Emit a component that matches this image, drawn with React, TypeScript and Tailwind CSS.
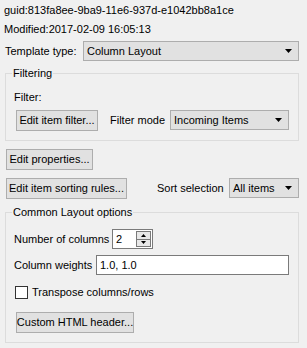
import type { ReactNode } from 'react';

// ─── bits ─────────────────────────────────────────────────────────────────────

function Arrow() {
    return (
        <svg width="7" height="4" viewBox="0 0 7 4" className="shrink-0">
            <path d="M0 0h7L3.5 4z" fill="#000" />
        </svg>
    );
}

function Button({ w, children, className = '' }: { w: string; children: ReactNode; className?: string }) {
    return (
        <div
            className={`${w} h-[21px] shrink-0 flex items-center justify-center bg-[#e1e1e1] border border-[#adadad] whitespace-nowrap ${className}`}
        >
            {children}
        </div>
    );
}

function Combo({ w, h = 'h-[20px]', value, className = '' }: { w: string; h?: string; value: string; className?: string }) {
    return (
        <div
            className={`${w} ${h} shrink-0 flex items-center justify-between pl-[3px] pr-[6px] bg-[#e1e1e1] border border-[#adadad] whitespace-nowrap ${className}`}
        >
            <span>{value}</span>
            <Arrow />
        </div>
    );
}

function Group({ title, className = '', children }: { title: string; className?: string; children: ReactNode }) {
    return (
        <fieldset className={`ml-[5px] w-[294px] border border-[#dcdcdc] px-[8px] ${className}`}>
            <legend className="ml-[-2px] px-[1px] leading-[15px]">{title}</legend>
            {children}
        </fieldset>
    );
}

// ─── page ─────────────────────────────────────────────────────────────────────

export default function App() {
    return (
        <div className="w-[307px] h-[348px] overflow-hidden bg-[#f0f0f0] text-black text-[11px] font-['Liberation_Sans',Arial,sans-serif] pt-[1px]">
            <div className="h-[19px] pl-[4px] flex items-center">guid:813fa8ee-9ba9-11e6-937d-e1042bb8a1ce</div>
            <div className="h-[19px] pl-[4px] flex items-center">Modified:2017-02-09 16:05:13</div>

            <div className="mt-[2px] h-[20px] flex items-center">
                <span className="w-[83px] pl-[5px]">Template type:</span>
                <Combo w="w-[216px]" value="Column Layout" />
            </div>

            <Group title="Filtering" className="mt-[5px] pb-[9px]">
                <div className="pt-[8px] h-[25px] flex items-end">
                    <span className="leading-[17px]">Filter:</span>
                </div>
                <div className="mt-[4px] flex items-start">
                    <Button w="w-[82px]" className="ml-[2px]">Edit item filter...</Button>
                    <span className="ml-[12px] h-[20px] flex items-center">Filter mode</span>
                    <Combo w="w-[119px]" value="Incoming Items" className="ml-auto mr-[1px]" />
                </div>
            </Group>

            <Button w="w-[87px]" className="mt-[8px] ml-[6px]">Edit properties...</Button>

            <div className="mt-[8px] flex items-start">
                <Button w="w-[121px]" className="ml-[6px]">Edit item sorting rules...</Button>
                <span className="ml-[30px] h-[20px] flex items-center">Sort selection</span>
                <Combo w="w-[70px]" value="All items" className="ml-auto mr-[8px]" />
            </div>

            <Group title="Common Layout options" className="mt-[6px] pb-[9px]">
                <div className="pt-[9px] flex items-center">
                    <span className="w-[98px]">Number of columns</span>
                    <div className="w-[41px] h-[20px] flex items-stretch bg-white border border-[#7a7a7a]">
                        <span className="flex-1 pl-[3px] flex items-center">2</span>
                        <div className="w-[15px] my-[1px] mr-[1px] flex flex-col">
                            <div className="flex-1 flex items-center justify-center bg-[#e8e8e8] border border-[#7a7a7a]">
                                <svg width="5" height="3" viewBox="0 0 5 3">
                                    <path d="M2.5 0L5 3H0z" fill="#000" />
                                </svg>
                            </div>
                            <div className="flex-1 flex items-center justify-center bg-[#e8e8e8] border border-t-0 border-[#7a7a7a]">
                                <svg width="5" height="3" viewBox="0 0 5 3">
                                    <path d="M0 0h5L2.5 3z" fill="#000" />
                                </svg>
                            </div>
                        </div>
                    </div>
                </div>

                <div className="mt-[6px] flex items-center">
                    <span className="w-[82px]">Column weights</span>
                    <div className="w-[193px] h-[20px] pl-[3px] flex items-center bg-white border border-[#7a7a7a]">1.0, 1.0</div>
                </div>

                <div className="mt-[9px] flex items-center">
                    <div className="ml-[1px] w-[13px] h-[13px] bg-white border border-[#333]" />
                    <span className="ml-[4px]">Transpose columns/rows</span>
                </div>

                <Button w="w-[118px]" className="mt-[11px] ml-[2px]">Custom HTML header...</Button>
            </Group>
        </div>
    );
}
